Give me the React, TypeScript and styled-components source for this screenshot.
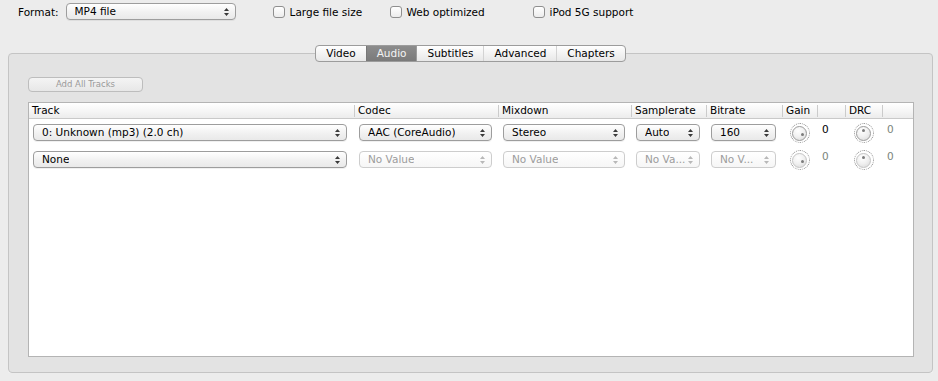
import React from 'react'
import styled, { createGlobalStyle, css } from 'styled-components'

const GlobalStyle = createGlobalStyle`
  * {
    box-sizing: border-box;
  }
  body {
    margin: 0;
    background: #ececec;
    font-family: 'DejaVu Sans', 'Liberation Sans', sans-serif;
    font-size: 10.5px;
    color: #000;
  }
`

type Column = { key: string; label: string; width: string }

const columns: Column[] = [
  { key: 'track', label: 'Track', width: '325px' },
  { key: 'codec', label: 'Codec', width: '144px' },
  { key: 'mixdown', label: 'Mixdown', width: '133px' },
  { key: 'samplerate', label: 'Samplerate', width: '75px' },
  { key: 'bitrate', label: 'Bitrate', width: '76px' },
  { key: 'gain', label: 'Gain', width: '35px' },
  { key: 'gainValue', label: '', width: '28px' },
  { key: 'drc', label: 'DRC', width: '37px' },
  { key: 'drcValue', label: '', width: '1fr' },
]

const gridTemplate = columns.map((c) => c.width).join(' ')

type AudioTrack = {
  track: string
  codec: string
  mixdown: string
  samplerate: string
  bitrate: string
  gain: string
  drc: string
  enabled: boolean
}

const tracks: AudioTrack[] = [
  {
    track: '0: Unknown (mp3) (2.0 ch)',
    codec: 'AAC (CoreAudio)',
    mixdown: 'Stereo',
    samplerate: 'Auto',
    bitrate: '160',
    gain: '0',
    drc: '0',
    enabled: true,
  },
  {
    track: 'None',
    codec: 'No Value',
    mixdown: 'No Value',
    samplerate: 'No Va...',
    bitrate: 'No V...',
    gain: '0',
    drc: '0',
    enabled: false,
  },
]

const tabs = ['Video', 'Audio', 'Subtitles', 'Advanced', 'Chapters']

const options = [
  { label: 'Large file size', width: 117 },
  { label: 'Web optimized', width: 143 },
  { label: 'iPod 5G support', width: 0 },
]

const Arrows = ({ disabled }: { disabled?: boolean }) => (
  <svg width="5" height="8" viewBox="0 0 5 8">
    <path d="M2.5 0 L5 3 L0 3 Z M0 5 L5 5 L2.5 8 Z" fill={disabled ? '#b8b8b8' : '#3a3a3a'} />
  </svg>
)

const Popup = ({ label, disabled }: { label: string; disabled?: boolean }) => (
  <PopupButton disabled={disabled}>
    <PopupLabel>{label}</PopupLabel>
    <Arrows disabled={disabled} />
  </PopupButton>
)

const Knob = ({ pointer, disabled }: { pointer: 'right' | 'top'; disabled?: boolean }) => (
  <KnobRing>
    <KnobFace $disabled={disabled}>
      <KnobDot $pointer={pointer} />
    </KnobFace>
  </KnobRing>
)

const App = () => {
  return (
    <>
      <GlobalStyle />
      <TopBar>
        <FormatLabel>{'Format:'}</FormatLabel>
        <FormatPopup>
          <Popup label={'MP4 file'} />
        </FormatPopup>
        <Options>
          {options.map((opt) => (
            <CheckItem key={opt.label} $width={opt.width}>
              <CheckBox />
              <span>{opt.label}</span>
            </CheckItem>
          ))}
        </Options>
      </TopBar>

      <TabView>
        <TabStrip>
          {tabs.map((tab) => (
            <Tab key={tab} $selected={tab === 'Audio'}>
              {tab}
            </Tab>
          ))}
        </TabStrip>
        <TabPanel>
          <AddButton type={'button'} disabled>
            {'Add All Tracks'}
          </AddButton>
          <TrackTable>
            <HeaderRow>
              {columns.map((col, idx) => (
                <HeaderCell key={col.key} $first={idx === 0}>
                  {col.label}
                </HeaderCell>
              ))}
            </HeaderRow>
            {tracks.map((t, idx) => (
              <TrackRow key={idx}>
                <PopupCell>
                  <Popup label={t.track} />
                </PopupCell>
                <PopupCell>
                  <Popup label={t.codec} disabled={!t.enabled} />
                </PopupCell>
                <PopupCell>
                  <Popup label={t.mixdown} disabled={!t.enabled} />
                </PopupCell>
                <PopupCell>
                  <Popup label={t.samplerate} disabled={!t.enabled} />
                </PopupCell>
                <PopupCell>
                  <Popup label={t.bitrate} disabled={!t.enabled} />
                </PopupCell>
                <KnobCell>
                  <Knob pointer={'right'} disabled={!t.enabled} />
                </KnobCell>
                <ValueCell $active={t.enabled}>{t.gain}</ValueCell>
                <KnobCell>
                  <Knob pointer={'top'} disabled={!t.enabled} />
                </KnobCell>
                <ValueCell>{t.drc}</ValueCell>
              </TrackRow>
            ))}
          </TrackTable>
        </TabPanel>
      </TabView>
    </>
  )
}

const TopBar = styled.div`
  display: flex;
  align-items: center;
  height: 17px;
  margin-top: 3px;
  padding-left: 18px;
`

const FormatLabel = styled.span`
  margin-right: 7px;
`

const FormatPopup = styled.div`
  width: 170px;
`

const Options = styled.div`
  display: flex;
  align-items: center;
  margin-left: 37px;
`

const PopupButton = styled.div<{ disabled?: boolean }>`
  display: flex;
  align-items: center;
  justify-content: space-between;
  width: 100%;
  height: 17px;
  padding: 0 6px 0 8px;
  border: 1px solid #9d9d9d;
  border-radius: 4px;
  background: linear-gradient(#ffffff, #f1f1f1 55%, #e9e9e9);
  box-shadow: 0 1px 0 rgba(0, 0, 0, 0.06);
  color: #000;
  white-space: nowrap;
  ${({ disabled }) =>
    disabled &&
    css`
      border-color: #cdcdcd;
      color: #9c9c9c;
      background: linear-gradient(#ffffff, #f6f6f6);
      box-shadow: none;
    `}
`

const PopupLabel = styled.span`
  overflow: hidden;
  line-height: 15px;
`

const CheckItem = styled.label<{ $width: number }>`
  display: flex;
  align-items: center;
  gap: 5px;
  width: ${({ $width }) => ($width ? `${$width}px` : 'auto')};
  white-space: nowrap;
`

const CheckBox = styled.span`
  display: inline-block;
  width: 12px;
  height: 12px;
  border: 1px solid #8f8f8f;
  border-radius: 3px;
  background: linear-gradient(#ffffff, #ececec);
`

const TabView = styled.div`
  margin: 25px 5px 0 8px;
`

const TabStrip = styled.div`
  position: relative;
  z-index: 1;
  display: flex;
  justify-content: center;
  width: fit-content;
  margin: 0 auto;
  border: 1px solid #9c9c9c;
  border-radius: 4px;
  background: linear-gradient(#ffffff, #f3f3f3 50%, #e8e8e8);
  overflow: hidden;
`

const Tab = styled.div<{ $selected?: boolean }>`
  height: 15px;
  line-height: 15px;
  padding: 0 10px;
  border-left: 1px solid #d3d3d3;
  color: #000;
  &:first-child {
    border-left: none;
  }
  ${({ $selected }) =>
    $selected &&
    css`
      background: linear-gradient(#8c8c8c, #7a7a7a);
      color: #f4f4f4;
      border-left-color: #777;
      & + div {
        border-left-color: #9c9c9c;
      }
    `}
`

const TabPanel = styled.div`
  display: flex;
  flex-direction: column;
  align-items: flex-start;
  height: 320px;
  margin-top: -9px;
  padding: 23px 18px 15px 19px;
  border: 1px solid #c4c4c4;
  border-radius: 4px;
  background: #e3e3e3;
  box-shadow: 0 1px 0 #f4f4f4;
`

const AddButton = styled.button`
  width: 115px;
  height: 15px;
  padding: 0;
  border: 1px solid #bdbdbd;
  border-radius: 4px;
  background: linear-gradient(#f4f4f4, #e7e7e7);
  color: #9a9a9a;
  font-family: 'DejaVu Sans', 'Liberation Sans', sans-serif;
  font-size: 8.5px;
  line-height: 13px;
`

const TrackTable = styled.div`
  align-self: stretch;
  flex: 1;
  margin-top: 10px;
  border: 1px solid #b4b4b4;
  background: #fff;
`

const HeaderRow = styled.div`
  display: grid;
  grid-template-columns: ${gridTemplate};
  height: 16px;
  border-bottom: 1px solid #c9c9c9;
  background: linear-gradient(#ffffff, #f6f6f6 50%, #ececec);
`

const HeaderCell = styled.div<{ $first?: boolean }>`
  position: relative;
  padding-left: ${({ $first }) => ($first ? '3px' : '4px')};
  line-height: 15px;
  ${({ $first }) =>
    !$first &&
    css`
      &::before {
        content: '';
        position: absolute;
        left: 0;
        top: 2px;
        bottom: 1px;
        width: 1px;
        background: #cbcbcb;
      }
    `}
`

const TrackRow = styled.div`
  display: grid;
  grid-template-columns: ${gridTemplate};
  height: 27px;
  padding-top: 5px;
`

const PopupCell = styled.div`
  padding: 0 6px 0 5px;
  &:first-child {
    padding: 0 7px 0 4px;
  }
`

const KnobCell = styled.div`
  display: flex;
  justify-content: center;
`

const KnobRing = styled.div`
  display: flex;
  align-items: center;
  justify-content: center;
  width: 20px;
  height: 20px;
  margin-top: -1px;
  border: 1px dotted #8a8a8a;
  border-radius: 50%;
`

const KnobFace = styled.div<{ $disabled?: boolean }>`
  position: relative;
  width: 15px;
  height: 15px;
  border: 1px solid ${({ $disabled }) => ($disabled ? '#c4c4c4' : '#9a9a9a')};
  border-radius: 50%;
  background: radial-gradient(circle at 40% 30%, #ffffff, #f0f0f0 50%, #d6d6d6);
`

const KnobDot = styled.span<{ $pointer: 'right' | 'top' }>`
  position: absolute;
  width: 3px;
  height: 3px;
  border-radius: 50%;
  background: #7c7c7c;
  ${({ $pointer }) =>
    $pointer === 'right'
      ? css`
          right: 2px;
          top: 6px;
        `
      : css`
          left: 5px;
          top: 2px;
        `}
`

const ValueCell = styled.div<{ $active?: boolean }>`
  padding-left: 5px;
  line-height: 11px;
  color: ${({ $active }) => ($active ? '#000' : '#7b857b')};
`

export default App
